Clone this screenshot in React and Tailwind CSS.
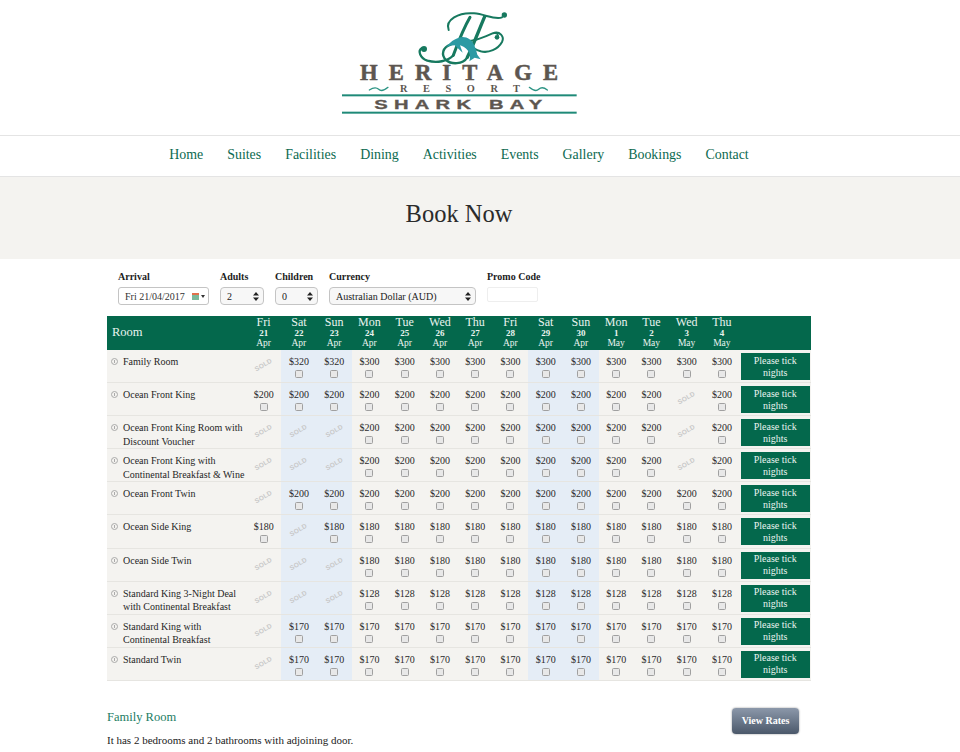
const serif = { fontFamily: '"Liberation Serif", serif' };

const DAYS = [
  ['Fri', 21, 'Apr'], ['Sat', 22, 'Apr'], ['Sun', 23, 'Apr'], ['Mon', 24, 'Apr'], ['Tue', 25, 'Apr'],
  ['Wed', 26, 'Apr'], ['Thu', 27, 'Apr'], ['Fri', 28, 'Apr'], ['Sat', 29, 'Apr'], ['Sun', 30, 'Apr'],
  ['Mon', 1, 'May'], ['Tue', 2, 'May'], ['Wed', 3, 'May'], ['Thu', 4, 'May'],
];

const NAV = ['Home', 'Suites', 'Facilities', 'Dining', 'Activities', 'Events', 'Gallery', 'Bookings', 'Contact'];

const fill = (first, rest, soldWed) => {
  const out = [...first];
  while (out.length < 14) out.push(rest);
  if (soldWed) out[12] = 0;
  return out;
};

const ROOMS = [
  { name: ['Family Room'], p: fill([0, 320, 320], 300) },
  { name: ['Ocean Front King'], p: fill([200, 200, 200], 200, true) },
  { name: ['Ocean Front King Room with', 'Discount Voucher'], p: fill([0, 0, 0], 200, true) },
  { name: ['Ocean Front King with', 'Continental Breakfast & Wine'], p: fill([0, 0, 0], 200, true) },
  { name: ['Ocean Front Twin'], p: fill([0, 200, 200], 200) },
  { name: ['Ocean Side King'], p: fill([180, 0, 180], 180) },
  { name: ['Ocean Side Twin'], p: fill([0, 0, 0], 180) },
  { name: ['Standard King 3-Night Deal', 'with Continental Breakfast'], p: fill([0, 0, 0], 128) },
  { name: ['Standard King with', 'Continental Breakfast'], p: fill([0, 170, 170], 170) },
  { name: ['Standard Twin'], p: fill([0, 170, 170], 170) },
];

const isWeekend = (i) => i === 1 || i === 2 || i === 8 || i === 9;

function Logo() {
  return (
    <svg width="280" height="130" viewBox="0 0 840 390" className="block">
      <g fill="none" stroke="#17795f" strokeLinecap="round">
        <path strokeWidth="6" d="M386 90 C374 60 416 36 462 40 C496 43 524 60 546 52" />
        <path strokeWidth="9" d="M450 52 C430 86 414 128 400 166" />
        <path strokeWidth="7" d="M400 166 C384 184 350 190 322 182 C300 174 292 152 306 144" />
        <path strokeWidth="10" d="M494 50 C476 92 460 136 442 172" />
        <path strokeWidth="7" d="M442 172 C428 194 394 194 378 180 C362 164 368 142 392 134" />
        <path strokeWidth="6" d="M424 120 C452 130 490 112 518 100 C540 92 554 110 546 126 C534 148 506 160 482 154 C468 150 456 142 448 132" />
        <path strokeWidth="4" d="M518 100 C526 98 534 102 535 108" />
      </g>
      <circle cx="553" cy="45" r="8" fill="#17795f" />
      <circle cx="312" cy="147" r="9" fill="#17795f" />
      <circle cx="531" cy="112" r="7" fill="#17795f" />
      <path
        fill="#2b9aa3"
        d="M378 142 C388 130 396 120 416 113 C438 107 454 118 462 134 C468 146 470 156 472 164 L482 178 L464 173 L448 184 C452 170 450 160 444 152 C436 142 428 138 420 136 L428 158 L404 136 C394 136 386 138 378 142 Z"
      />
      <g fill="#5d5650" fontFamily='"Liberation Serif", serif' fontWeight="700">
        <text x="120" y="241" fontSize="68" stroke="#5d5650" strokeWidth="1.5" textLength="594" lengthAdjust="spacing">HERITAGE</text>
        <text x="240" y="277" fontSize="31" textLength="360" lengthAdjust="spacing">RESORT</text>
      </g>
      <g transform="translate(163 326) scale(1.55 1)">
        <text fontFamily='"Liberation Sans", sans-serif' fontWeight="700" fontSize="39" fill="#5d5650" stroke="#5d5650" strokeWidth="1" textLength="325" lengthAdjust="spacing">SHARK BAY</text>
      </g>
      <g fill="none" stroke="#2c9484" strokeWidth="4" strokeLinecap="round">
        <path d="M148 270 C160 262 170 262 176 268 C182 274 192 272 204 262" />
        <path d="M628 262 C640 272 650 274 656 268 C662 262 672 262 682 270" />
      </g>
      <rect x="66" y="283" width="704" height="6" fill="#1f8a78" />
      <rect x="66" y="335" width="704" height="6" fill="#1f8a78" />
    </svg>
  );
}

function Field({ label, className, children }) {
  return (
    <div className={className}>
      <div className="text-[10px] font-bold leading-[13px] text-[#1d1d1d] mb-[4px] whitespace-nowrap">{label}</div>
      {children}
    </div>
  );
}

function Arrows() {
  return (
    <svg width="6" height="9" viewBox="0 0 6 9" className="shrink-0">
      <path d="M3 0 L6 3.5 H0 Z M3 9 L6 5.5 H0 Z" fill="#222" />
    </svg>
  );
}

function FakeSelect({ value, className }) {
  return (
    <div className={`h-[18px] flex items-center justify-between pl-[6px] pr-[4px] rounded-[4px] border border-[#c4c4c4] bg-[#f7f7f7] text-[10px] text-[#222] ${className}`}>
      <span>{value}</span>
      <Arrows />
    </div>
  );
}

function Check() {
  return <input type="checkbox" className="appearance-none block w-[8px] h-[8px] rounded-[1.5px] border border-[#a0a0a0] bg-[#e8e8e8] mx-auto" />;
}

function Cell({ price, i }) {
  const bg = isWeekend(i) ? 'bg-[#e5edf6]' : '';
  return (
    <div className={`${bg} flex flex-col items-center pt-[6px]`}>
      {price ? (
        <>
          <span className="text-[10px] leading-[12px] text-[#2a2a2a]">${price}</span>
          <div className="mt-[2px]"><Check /></div>
        </>
      ) : (
        <span className="mt-[5px] -rotate-[30deg] text-[6.5px] font-bold leading-[8px] text-[#c8c8c8] tracking-[0.2px]" style={{ fontFamily: '"Liberation Sans", sans-serif' }}>SOLD</span>
      )}
    </div>
  );
}

function Row({ room }) {
  return (
    <div className="grid grid-cols-[139px_repeat(14,35.25px)_1fr] h-[33.1px] bg-[#f4f3f0] border-b border-[#e6e5e1] box-border">
      <div className="flex pl-[4px] pt-[5px]">
        <span className="w-[7px] h-[7px] mt-[3px] rounded-full border border-[#aaaaaa] shrink-0 flex items-center justify-center text-[#aaaaaa]">
          <span className="w-[1px] h-[3px] bg-[#aaaaaa]" />
        </span>
        <div className="ml-[5px] text-[10px] leading-[13.5px] text-[#262626] whitespace-nowrap">
          {room.name.map((n) => <div key={n}>{n}</div>)}
        </div>
      </div>
      {room.p.map((price, i) => <Cell key={i} price={price} i={i} />)}
      <div className="pl-[1px] pr-[1px] pt-[3px] pb-[2px]">
        <div className="h-[27px] bg-[#04684c] text-[#e9f3ef] text-[10px] leading-[12px] text-center flex items-center justify-center">
          Please tick<br />nights
        </div>
      </div>
    </div>
  );
}

export default function App() {
  return (
    <div className="w-[960px] h-[752px] overflow-hidden bg-white" style={serif}>
      <header className="h-[135px] flex justify-center pr-[40px]">
        <Logo />
      </header>
      <nav className="h-[42px] border-y border-[#e4e4e4] flex items-center justify-center gap-[24px] text-[13.9px] text-[#0c6a50] pr-[42px] pb-[1px]">
        {NAV.map((n) => <span key={n}>{n}</span>)}
      </nav>
      <section className="h-[82px] bg-[#f4f3f0] flex items-center justify-center pb-[8px] pr-[42px]">
        <h1 className="text-[24.5px] leading-[32px] text-[#2b2b2b]">Book Now</h1>
      </section>

      <div className="pl-[118px] pt-[11px] flex h-[57px]">
        <Field label="Arrival" className="w-[102px]">
          <div className="w-[91px] h-[18px] flex items-center pl-[6px] pr-[3px] rounded-[3px] border border-[#c4c4c4] bg-white text-[10px] text-[#333]">
            <span className="flex-1 whitespace-nowrap">Fri 21/04/2017</span>
            <span className="w-[7px] h-[7px] bg-[linear-gradient(180deg,#e2704b_0_30%,#7cb89a_30%_100%)] mr-[1px]" />
            <span className="w-0 h-0 border-x-[2px] border-x-transparent border-t-[3px] border-t-[#333] ml-[1px]" />
          </div>
        </Field>
        <Field label="Adults" className="w-[55px]">
          <FakeSelect value="2" className="w-[44px]" />
        </Field>
        <Field label="Children" className="w-[54px]">
          <FakeSelect value="0" className="w-[43px]" />
        </Field>
        <Field label="Currency" className="w-[158px]">
          <FakeSelect value="Australian Dollar (AUD)" className="w-[147px]" />
        </Field>
        <Field label="Promo Code" className="w-[60px]">
          <div className="w-[51px] h-[15px] rounded-[2px] border border-[#eeeeee] bg-white" />
        </Field>
      </div>

      <div className="ml-[107px] w-[704px]">
        <div className="grid grid-cols-[139px_repeat(14,35.25px)_1fr] h-[34px] bg-[#04684c] text-[#eaf4f0]">
          <div className="flex items-center pl-[5px] pb-[1px] text-[12.5px]">Room</div>
          {DAYS.map(([d, n, m], i) => (
            <div key={i} className="flex flex-col items-center pt-[1px]">
              <span className="text-[12px] leading-[11px]">{d}</span>
              <span className="text-[9px] font-bold leading-[10px]">{n}</span>
              <span className="text-[9.5px] leading-[10px]">{m}</span>
            </div>
          ))}
          <div />
        </div>
        {ROOMS.map((r) => <Row key={r.name[0] + r.name.length} room={r} />)}
      </div>

      <div className="ml-[107px] w-[692px] mt-[27px] flex justify-between items-start">
        <div className="pt-[1px]">
          <h2 className="text-[12.5px] leading-[16px] text-[#1c7d64]">Family Room</h2>
          <p className="mt-[8px] text-[11px] leading-[14px] text-[#222]">It has 2 bedrooms and 2 bathrooms with adjoining door.</p>
        </div>
        <button className="w-[67px] h-[26px] rounded-[4px] bg-[linear-gradient(180deg,#8c98aa,#4b586a)] text-white text-[10px] font-bold shadow-[0_0_2px_#888] pb-[1px]">
          View Rates
        </button>
      </div>
    </div>
  );
}
